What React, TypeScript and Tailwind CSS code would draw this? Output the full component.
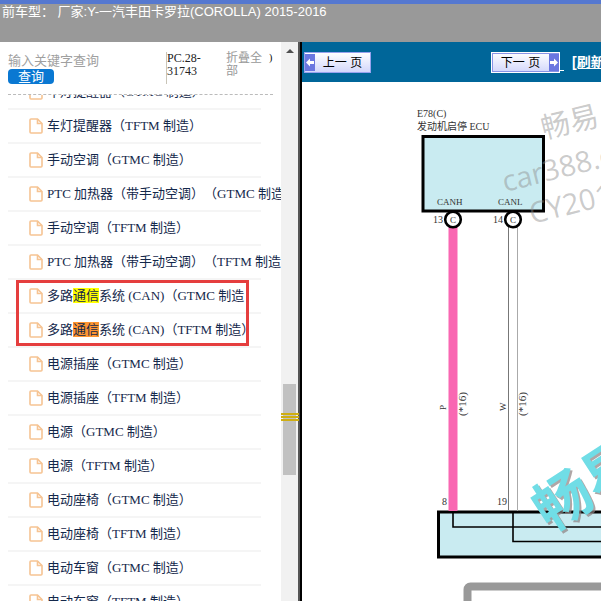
import { useState } from 'react';

type TocItem = {
    id: number;
    name: string;
    mark?: 'yellow' | 'orange';
    boxed?: boolean;
};

const items: TocItem[] = [
    { id: 1, name: '车灯提醒器（GTMC 制造）' },
    { id: 2, name: '车灯提醒器（TFTM 制造）' },
    { id: 3, name: '手动空调（GTMC 制造）' },
    { id: 4, name: 'PTC 加热器（带手动空调）（GTMC 制造）' },
    { id: 5, name: '手动空调（TFTM 制造）' },
    { id: 6, name: 'PTC 加热器（带手动空调）（TFTM 制造）' },
    { id: 7, name: '多路通信系统 (CAN)（GTMC 制造', mark: 'yellow', boxed: true },
    { id: 8, name: '多路通信系统 (CAN)（TFTM 制造）', mark: 'orange' },
    { id: 9, name: '电源插座（GTMC 制造）' },
    { id: 10, name: '电源插座（TFTM 制造）' },
    { id: 11, name: '电源（GTMC 制造）' },
    { id: 12, name: '电源（TFTM 制造）' },
    { id: 13, name: '电动座椅（GTMC 制造）' },
    { id: 14, name: '电动座椅（TFTM 制造）' },
    { id: 15, name: '电动车窗（GTMC 制造）' },
    { id: 16, name: '电动车窗（TFTM 制造）' },
];

const KEYWORD = '通信';

function FileIcon() {
    return (
        <svg width="14" height="16" viewBox="0 0 14 16" fill="none" stroke="#f6c493" strokeWidth="1.6" className="shrink-0">
            <path d="M2 1H8.5L13 5.5V14A1 1 0 0 1 12 15H2A1 1 0 0 1 1 14V2A1 1 0 0 1 2 1Z" />
            <path d="M8.5 1V5.5H13" />
        </svg>
    );
}

function ItemName({ item }: { item: TocItem }) {
    if (!item.mark) return <>{item.name}</>;

    const [before, after] = item.name.split(KEYWORD);
    return (
        <>
            {before}
            <mark className={item.mark === 'yellow' ? 'bg-[#ffff00] text-inherit' : 'bg-[#ff9632] text-inherit'}>{KEYWORD}</mark>
            {after}
        </>
    );
}

function Sidebar() {
    const [keyword, setKeyword] = useState('');

    return (
        <aside className="flex w-[281px] shrink-0 flex-col overflow-hidden bg-white">
            <div className="ml-2 mr-2 flex h-[53px] shrink-0 items-start border-b border-dashed border-[#bbb] pt-[10px]">
                <form className="w-[158px]" onSubmit={e => e.preventDefault()}>
                    <input
                        type="text"
                        aria-label="输入关键字查询"
                        placeholder="输入关键字查询"
                        value={keyword}
                        onChange={e => setKeyword(e.target.value)}
                        className="block h-[17px] w-full text-[13px] leading-[17px] outline-none placeholder:text-[#a0a0a0]"
                    />
                    <button type="submit" className="block h-[15px] w-[46px] rounded bg-[#0a78d2] text-[13px] leading-[15px] text-white">
                        查询
                    </button>
                </form>
                <div className="h-8 w-[60px] border-l border-[#c9c5b8] text-[12px] leading-[13px] text-[#222]">
                    PC.28-
                    <br />
                    31743
                </div>
                <button type="button" className="w-[39px] text-left text-[12px] leading-[13px] text-[#999]">
                    折叠全部
                </button>
                <span className="pl-1 text-[10px] leading-[12px] text-black">)</span>
            </div>
            <div className="min-h-0 flex-1 overflow-hidden pl-2">
                <ul className="-mt-[19px] w-[253px] [text-spacing-trim:space-all]">
                    {items.map(item => (
                        <li key={item.id} className="relative h-[34px] border-b-2 border-[#f5f5f5] pl-[21px]">
                            <a href="#" className="flex h-8 items-center gap-1 whitespace-nowrap text-[13px] leading-4 text-[#14284b]">
                                <FileIcon />
                                <span>
                                    <ItemName item={item} />
                                </span>
                            </a>
                            {item.boxed && (
                                <div className="pointer-events-none absolute left-2 top-0 z-10 h-[66px] w-[233px] border-3 border-[#e53e3e]" />
                            )}
                        </li>
                    ))}
                </ul>
            </div>
        </aside>
    );
}

function ScrollTrack() {
    return (
        <div className="relative flex shrink-0">
            <div className="flex w-[17px] flex-col items-center bg-[#f1f1f1]">
                <svg width="8" height="4" viewBox="0 0 8 4" className="mt-[7px]">
                    <path d="M4 0L8 4H0Z" fill="#505050" />
                </svg>
                <div className="mt-[331px] h-[91px] w-[13px] bg-[#c1c1c1]" />
            </div>
            <div className="w-1 border-l-2 border-[#555] bg-black" />
            <div className="absolute left-0 top-[371px] flex w-[18px] flex-col gap-px">
                <div className="h-[2px] bg-[#cfae12]" />
                <div className="h-[2px] bg-[#cfae12]" />
                <div className="h-[2px] bg-[#cfae12]" />
            </div>
        </div>
    );
}

function PageArrow({ flip = false }: { flip?: boolean }) {
    return (
        <svg width="10" height="17" viewBox="0 0 10 17" className={flip ? 'shrink-0 rotate-180' : 'shrink-0'}>
            <rect width="10" height="17" fill="#6b77e0" />
            <path d="M1 8.5L5 4.5V7H9V10H5V12.5Z" fill="#fff" />
        </svg>
    );
}

function PageNav() {
    return (
        <nav className="flex h-10 items-start overflow-hidden bg-[#006699] pt-[10px] pl-[2px] font-['Liberation_Sans','Noto_Sans_CJK_SC',sans-serif]">
            <button
                type="button"
                className="flex h-[21px] w-[67px] shrink-0 items-center border border-[#98a2ee] bg-linear-to-b from-white to-[#d3d7fb] text-[12px] text-black"
            >
                <PageArrow />
                <span className="flex-1 whitespace-nowrap">上一 页</span>
            </button>
            <button
                type="button"
                className="ml-[120px] flex h-[21px] w-[69px] shrink-0 items-center border border-white bg-linear-to-b from-white to-[#d3d7fb] text-[12px] text-black outline-1 -outline-offset-2 outline-[#8a94e6]"
            >
                <span className="flex-1 whitespace-nowrap">下一 页</span>
                <PageArrow flip />
            </button>
            <span className="h-[19px] w-1 shrink-0 border-b border-white" />
            <a href="#" className="ml-2 shrink-0 whitespace-nowrap text-[14px] font-bold leading-5 text-white underline">
                [刷新]
            </a>
        </nav>
    );
}

function WiringDiagram() {
    return (
        <svg width="1600" height="519" className="block shrink-0" fill="#333">
            <g fontFamily="'Liberation Serif','Noto Sans CJK SC',serif" fontSize="10">
                <text x="115" y="35">E78(C)</text>
                <text x="115" y="48">发动机启停 ECU</text>
            </g>

            <rect x="121" y="54.5" width="120.5" height="74.5" fill="#c9ebf1" stroke="#000" strokeWidth="3" />
            <rect x="136.5" y="430" width="1500" height="45" fill="#c9ebf1" stroke="#000" strokeWidth="3" />

            {/* CANH wire */}
            <rect x="146.5" y="145" width="9" height="284" fill="#f967b2" />
            <path d="M151 430V445H1600" fill="none" stroke="#000" strokeWidth="1.6" />

            {/* CANL wire */}
            <path d="M206.5 145V429" stroke="#777" />
            <path d="M215.5 145V429" stroke="#aaa" />
            <path d="M211 430V459.5H1600" fill="none" stroke="#000" strokeWidth="1.6" />

            <circle cx="151" cy="137.5" r="7.8" fill="#fff" stroke="#000" strokeWidth="2.6" />
            <circle cx="211" cy="137.5" r="7.8" fill="#fff" stroke="#000" strokeWidth="2.6" />

            <g fontFamily="'Liberation Serif',serif" fontSize="10">
                <text x="135" y="123" fontSize="9">CANH</text>
                <text x="196" y="123" fontSize="9">CANL</text>
                <text x="131" y="141">13</text>
                <text x="191" y="141">14</text>
                <text x="148" y="141" fontSize="9">C</text>
                <text x="208" y="141" fontSize="9">C</text>
                <text transform="translate(144 328) rotate(-90)" fontSize="9">P</text>
                <text transform="translate(204 329) rotate(-90)" fontSize="9">W</text>
                <text transform="translate(164 334) rotate(-90)" fontSize="11">(*16)</text>
                <text transform="translate(224 334) rotate(-90)" fontSize="11">(*16)</text>
                <text x="140" y="423">8</text>
                <text x="195" y="423">19</text>
            </g>

            <rect x="165.5" y="504.5" width="1500" height="200" rx="3" fill="none" stroke="#999" strokeWidth="8" />

            <g fontFamily="'Open Sans','Noto Sans CJK SC',sans-serif" fontSize="29" fill="#8c8c8c" fillOpacity="0.45">
                <text transform="translate(242 57) rotate(-14)">畅易</text>
                <text transform="translate(203 110) rotate(-14)">car388.com</text>
                <text transform="translate(230 142) rotate(-14)">CY2016</text>
            </g>

            <g fontFamily="'Noto Sans CJK SC',sans-serif" fontSize="57" fontWeight="700">
                <text transform="translate(250 453) rotate(-33)" fill="#8d8080" fillOpacity="0.7">畅易汽车</text>
                <text transform="translate(248 451) rotate(-33)" fill="#70dde6">畅易汽车</text>
            </g>
        </svg>
    );
}

export default function App() {
    return (
        <div className="flex h-screen flex-col overflow-hidden bg-white font-['Liberation_Serif','Noto_Sans_CJK_SC',serif]">
            <header className="h-[42px] shrink-0 border-t-4 border-[#5578d0] bg-[#999] pl-[2px] font-['Liberation_Sans','Noto_Sans_CJK_SC',sans-serif]">
                <h1 className="whitespace-pre text-[13px] leading-4 text-white">前车型： 厂家:Y-一汽丰田卡罗拉(COROLLA) 2015-2016</h1>
            </header>
            <div className="flex min-h-0 flex-1">
                <Sidebar />
                <ScrollTrack />
                <main className="min-w-0 flex-1 overflow-hidden">
                    <PageNav />
                    <WiringDiagram />
                </main>
            </div>
        </div>
    );
}
